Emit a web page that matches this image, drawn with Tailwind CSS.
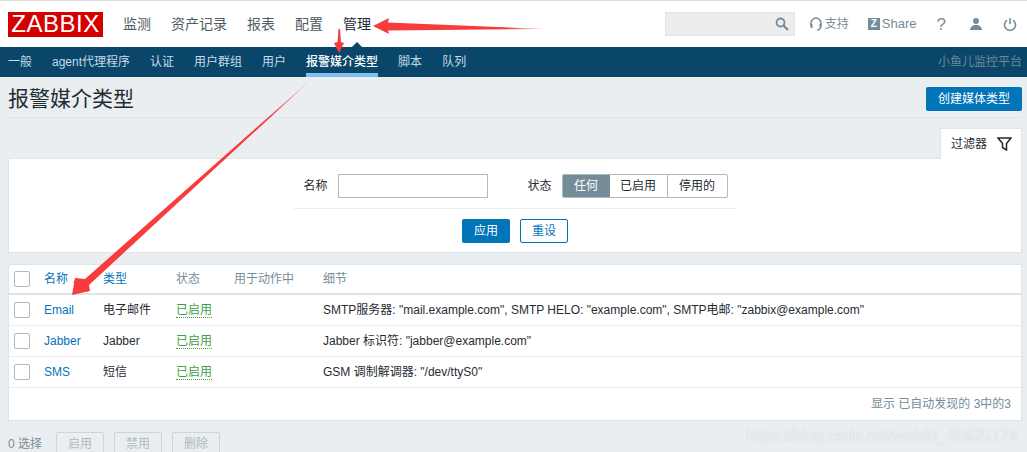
<!DOCTYPE html>
<html lang="zh">
<head>
  <meta charset="UTF-8">
  <title>报警媒介类型</title>
  <script src="https://cdn.jsdelivr.net/npm/@tailwindcss/browser@4"></script>
</head>
<body class="relative h-[452px] w-[1027px] overflow-hidden bg-[#ebeef0] font-['Liberation_Sans','Noto_Sans_CJK_SC',sans-serif] text-xs text-[#1f2c33]">
  <!-- Top nav -->
  <header class="flex h-[47px] items-center border-t border-t-[#dedede] bg-white pl-2">
    <div class="flex h-[25px] w-[95px] items-center justify-center bg-[#d40000] text-[24px] leading-none tracking-[0.5px] text-white">ZABBIX</div>
    <nav class="ml-5 flex gap-5 text-sm text-[#4f5a61]">
      <a>监测</a>
      <a>资产记录</a>
      <a>报表</a>
      <a>配置</a>
      <a class="relative text-[#1f2c33]">管理<span class="absolute left-[6px] top-[28px] h-0 w-0 border-x-[8px] border-b-[8px] border-x-transparent border-b-[#0a466a]"></span></a>
    </nav>
    <div class="ml-auto flex items-center pr-[10px] text-[#768d99]">
      <div class="flex h-[24px] w-[130px] items-center justify-end border border-[#e4e4e4] bg-[#ededed] pr-[5px]">
        <svg width="14" height="14" viewBox="0 0 14 14" fill="none" stroke="#768d99" stroke-width="1.8"><circle cx="5.5" cy="5.5" r="4"/><path d="M8.5 8.5l4.5 4.5" stroke-width="2.2"/></svg>
      </div>
      <div class="ml-[15px] flex items-center gap-[3px]">
        <svg width="12" height="14" viewBox="0 0 12 14" fill="none" stroke="#768d99" stroke-width="1.5"><path d="M1 9V6a5 5 0 0 1 10 0v3"/><rect x="0.5" y="7" width="2" height="4" fill="#768d99" stroke="none"/><rect x="9.5" y="7" width="2" height="4" fill="#768d99" stroke="none"/><path d="M10 11c0 1.500-1.500 2-3 2"/></svg>
        <span>支持</span>
      </div>
      <div class="ml-[19px] flex items-center gap-[2px]">
        <span class="flex h-3 w-3 items-center justify-center bg-[#768d99] text-[10px] font-bold leading-none text-white">Z</span>
        <span class="text-[13px]">Share</span>
      </div>
      <span class="ml-[20px] text-[17px] leading-none">?</span>
      <svg class="ml-[23px]" width="14" height="14" viewBox="0 0 14 14" fill="#768d99"><circle cx="7" cy="4" r="3"/><path d="M1 13c0-3 2.500-5 6-5s6 2 6 5z"/></svg>
      <svg class="ml-[20px]" width="14" height="14" viewBox="0 0 14 14" fill="none" stroke="#768d99" stroke-width="1.6"><path d="M4 3.200a5.500 5.500 0 1 0 6 0"/><path d="M7 1v6"/></svg>
    </div>
  </header>

  <!-- Sub nav -->
  <nav class="flex h-[30px] items-stretch bg-[#0a466a] pl-2 pr-[5px] text-[#c5dbe8]">
    <div class="flex gap-5">
      <a class="flex items-center">一般</a>
      <a class="flex items-center">agent代理程序</a>
      <a class="flex items-center">认证</a>
      <a class="flex items-center">用户群组</a>
      <a class="flex items-center">用户</a>
      <a class="flex items-center border-b-[4px] border-[#7fc0ef] pt-1 font-medium text-white">报警媒介类型</a>
      <a class="flex items-center">脚本</a>
      <a class="flex items-center">队列</a>
    </div>
    <span class="ml-auto flex items-center text-[#6f8a99]">小鱼儿监控平台</span>
  </nav>

  <main class="pl-2 pr-[5px]">
    <div class="flex h-[41px] items-start justify-between border-b border-[#dfe4e7] pt-[10px]">
      <h1 class="text-[21px] font-normal leading-6">报警媒介类型</h1>
      <button class="h-6 w-[96px] rounded-[2px] bg-[#0275b8] text-white">创建媒体类型</button>
    </div>

    <!-- Filter -->
    <div class="mt-[10px] flex justify-end">
      <div class="relative z-10 -mb-px flex h-[31px] w-[82px] items-center gap-[10px] border border-b-0 border-[#dfe4e7] bg-white pl-[10px]">
        <span>过滤器</span>
        <svg width="15" height="14" viewBox="0 0 15 14" fill="none" stroke="#1f2c33" stroke-width="1.500"><path d="M1 1h13L9.500 6.500V13l-4-2.500v-4z"/></svg>
      </div>
    </div>
    <section class="flex h-[95px] flex-col items-center border border-[#dfe4e7] bg-white">
      <div class="mt-[15px] flex h-[35px] w-[443px] items-start border-b border-[#ebeef0] pl-[10px]">
        <label class="mt-1">名称</label>
        <input class="ml-[10px] h-6 w-[150px] border border-[#acbbc2] bg-white">
        <label class="ml-10 mt-1">状态</label>
        <div class="ml-[10px] flex h-6 overflow-hidden rounded-[2px] border border-[#acbbc2]">
          <span class="flex w-[47px] items-center justify-center bg-[#768d99] text-white">任何</span>
          <span class="flex w-[58px] items-center justify-center border-r border-[#acbbc2]">已启用</span>
          <span class="flex w-[59px] items-center justify-center">停用的</span>
        </div>
      </div>
      <div class="mt-[10px] flex gap-[10px]">
        <button class="h-6 w-12 rounded-[2px] bg-[#0275b8] text-white">应用</button>
        <button class="h-6 w-12 rounded-[2px] border border-[#0275b8] bg-white text-[#0275b8]">重设</button>
      </div>
    </section>

    <!-- Table -->
    <section class="mt-[11px] h-[157px] border border-[#dfe4e7] bg-white">
      <div class="flex h-[30px] items-center border-b-[2px] border-[#dfe4e7] text-[#768d99]">
        <span class="ml-[5px] h-4 w-4 rounded-[2px] border border-[#acbbc2]"></span>
        <span class="ml-[14px] w-[59px] text-[#0275b8]">名称 <span class="text-[10px] text-[#768d99]">▲</span></span>
        <span class="w-[73px] text-[#0275b8]">类型</span>
        <span class="w-[58px]">状态</span>
        <span class="w-[89px]">用于动作中</span>
        <span>细节</span>
      </div>
      <div class="flex h-[31px] items-center border-b border-[#ebeef0]">
        <span class="ml-[5px] h-4 w-4 rounded-[2px] border border-[#acbbc2]"></span>
        <a class="ml-[14px] w-[59px] text-[#0275b8]">Email</a>
        <span class="w-[73px]">电子邮件</span>
        <span class="w-[147px]"><span class="border-b border-dotted border-[#429e47] text-[#429e47]">已启用</span></span>
        <span>SMTP服务器: "mail.example.com", SMTP HELO: "example.com", SMTP电邮: "zabbix@example.com"</span>
      </div>
      <div class="flex h-[31px] items-center border-b border-[#ebeef0]">
        <span class="ml-[5px] h-4 w-4 rounded-[2px] border border-[#acbbc2]"></span>
        <a class="ml-[14px] w-[59px] text-[#0275b8]">Jabber</a>
        <span class="w-[73px]">Jabber</span>
        <span class="w-[147px]"><span class="border-b border-dotted border-[#429e47] text-[#429e47]">已启用</span></span>
        <span>Jabber 标识符: "jabber@example.com"</span>
      </div>
      <div class="flex h-[31px] items-center border-b border-[#ebeef0]">
        <span class="ml-[5px] h-4 w-4 rounded-[2px] border border-[#acbbc2]"></span>
        <a class="ml-[14px] w-[59px] text-[#0275b8]">SMS</a>
        <span class="w-[73px]">短信</span>
        <span class="w-[147px]"><span class="border-b border-dotted border-[#429e47] text-[#429e47]">已启用</span></span>
        <span>GSM 调制解调器: "/dev/ttyS0"</span>
      </div>
      <div class="flex h-[32px] items-center justify-end pr-[10px] text-[#768d99]">显示 已自动发现的 3中的3</div>
    </section>

    <!-- Bulk actions -->
    <div class="mt-[11px] flex items-center text-[#768d99]">
      <span>0 选择</span>
      <button class="ml-[14px] h-6 w-12 rounded-[2px] border border-[#cdd5d9] text-[#acbbc2]">启用</button>
      <button class="ml-[10px] h-6 w-12 rounded-[2px] border border-[#cdd5d9] text-[#acbbc2]">禁用</button>
      <button class="ml-[10px] h-6 w-12 rounded-[2px] border border-[#cdd5d9] text-[#acbbc2]">删除</button>
    </div>
  </main>

  <!-- Watermark -->
  <span class="absolute left-[746px] top-[424px] text-base text-white/70 [text-shadow:0_0_1px_rgba(150,150,150,0.5)]">https://blog.csdn.net/weixin_45625174</span>

  <!-- Red annotation arrows -->
  <svg class="absolute left-0 top-0" width="1027" height="452" viewBox="0 0 1027 452" fill="#f73c3c">
    <defs>
      <linearGradient id="fadeRight" x1="389" y1="0" x2="546" y2="0" gradientUnits="userSpaceOnUse">
        <stop offset="0.75" stop-color="#f73c3c"/>
        <stop offset="1" stop-color="#f73c3c" stop-opacity="0.2"/>
      </linearGradient>
      <linearGradient id="fadeTop" x1="270" y1="115" x2="315" y2="76" gradientUnits="userSpaceOnUse">
        <stop offset="0" stop-color="#f73c3c"/>
        <stop offset="1" stop-color="#f73c3c" stop-opacity="0.2"/>
      </linearGradient>
    </defs>
    <path fill="url(#fadeRight)" d="M373 26L389 18L388 22.500L546 29L388 30.500L389 34z"/>
    <path d="M339 53L334 43L337.500 42L338.500 29L340 29L341 42L344 43z"/>
    <path fill="url(#fadeTop)" d="M72 295L75 278L85 279L315 76L89 285L90 291z"/>
  </svg>
</body>
</html>
